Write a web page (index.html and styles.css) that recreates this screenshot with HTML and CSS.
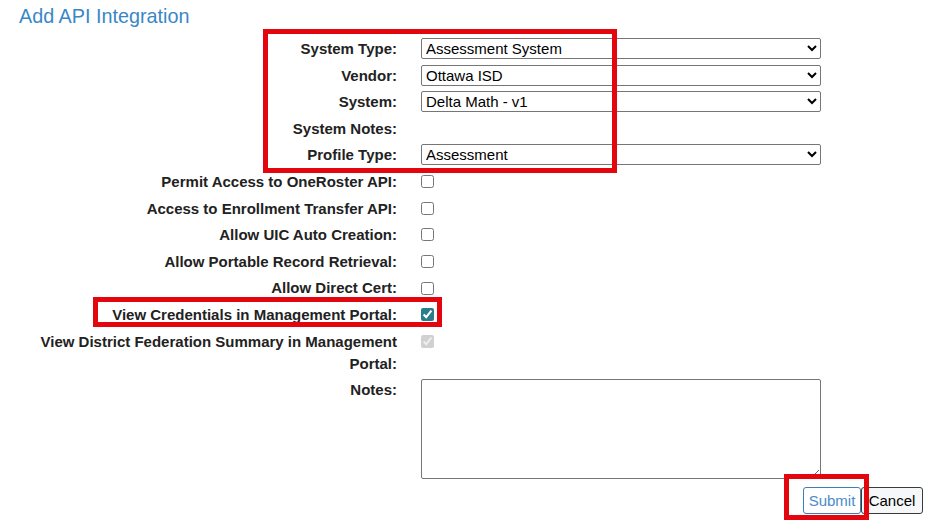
FILE: index.html
```html
<!DOCTYPE html>
<html lang="en">
<head>
<meta charset="utf-8">
<title>Add API Integration</title>
<link rel="stylesheet" href="styles.css">
</head>
<body>
<h1 class="title">Add API Integration</h1>
<form class="form">
  <div class="row">
    <label class="lbl">System Type:</label>
    <select class="sel"><option>Assessment System</option></select>
  </div>
  <div class="row">
    <label class="lbl">Vendor:</label>
    <select class="sel"><option>Ottawa ISD</option></select>
  </div>
  <div class="row">
    <label class="lbl">System:</label>
    <select class="sel"><option>Delta Math - v1</option></select>
  </div>
  <div class="row">
    <label class="lbl">System Notes:</label>
    <div class="empty"></div>
  </div>
  <div class="row">
    <label class="lbl">Profile Type:</label>
    <select class="sel"><option>Assessment</option></select>
  </div>
  <div class="row">
    <label class="lbl">Permit Access to OneRoster API:</label>
    <input class="chk" type="checkbox">
  </div>
  <div class="row">
    <label class="lbl">Access to Enrollment Transfer API:</label>
    <input class="chk" type="checkbox">
  </div>
  <div class="row">
    <label class="lbl">Allow UIC Auto Creation:</label>
    <input class="chk" type="checkbox">
  </div>
  <div class="row">
    <label class="lbl">Allow Portable Record Retrieval:</label>
    <input class="chk" type="checkbox">
  </div>
  <div class="row">
    <label class="lbl">Allow Direct Cert:</label>
    <input class="chk" type="checkbox">
  </div>
  <div class="row">
    <label class="lbl">View Credentials in Management Portal:</label>
    <input class="chk" type="checkbox" checked>
  </div>
  <div class="row">
    <label class="lbl">View District Federation Summary in Management Portal:</label>
    <input class="chk" type="checkbox" checked disabled>
  </div>
  <div class="row row-notes">
    <label class="lbl">Notes:</label>
    <textarea class="notes"></textarea>
  </div>
  <div class="actions">
    <button type="button" class="btn btn-submit">Submit</button>
    <button type="button" class="btn btn-cancel">Cancel</button>
  </div>
</form>
<div class="mark mark-top"></div>
<div class="mark mark-cred"></div>
<div class="mark mark-submit"></div>
</body>
</html>
```
FILE: styles.css
```css
html, body {
  margin: 0;
  padding: 0;
  background: #ffffff;
}
body {
  font-family: "Liberation Sans", Arial, sans-serif;
  color: #222222;
  width: 936px;
  height: 527px;
  overflow: hidden;
  position: relative;
}
.title {
  margin: 0;
  padding: 5px 0 0 19px;
  font-size: 19.8px;
  line-height: 22px;
  font-weight: normal;
  color: #3a87c6;
}
.form {
  width: 923px;
  margin: 0;
  padding-top: 8.7px;
}
.row {
  display: flex;
  align-items: flex-start;
  padding: 2.3px 0;
}
.lbl {
  width: 397px;
  flex: none;
  text-align: right;
  font-weight: bold;
  font-size: 15px;
  line-height: 22px;
  color: #222222;
  margin-right: 24px;
  box-sizing: border-box;
  padding-left: 30px;
}
.sel {
  width: 400px;
  height: 21px;
  margin: 0;
  box-sizing: border-box;
  font-family: "Liberation Sans", Arial, sans-serif;
  font-size: 15px;
  color: #000000;
  border: 1px solid #767676;
  border-radius: 2px;
  background-color: #ffffff;
  padding: 0;
}
.empty {
  height: 22px;
}
.chk {
  width: 13px;
  height: 13px;
  margin: 4.3px 0 0 0;
  accent-color: #2a7e8c;
}
.notes {
  width: 400px;
  height: 100px;
  margin: 0;
  box-sizing: border-box;
  border: 1px solid #767676;
  border-radius: 2px;
  font-family: "Liberation Sans", Arial, sans-serif;
  font-size: 14px;
  resize: vertical;
}
.actions {
  display: flex;
  justify-content: flex-end;
  margin-top: 5.5px;
}
.btn {
  height: 27px;
  box-sizing: border-box;
  font-family: "Liberation Sans", Arial, sans-serif;
  font-size: 15px;
  border-radius: 3px;
  margin: 0;
  cursor: pointer;
}
.btn-submit {
  width: 58px;
  padding: 0 4px;
  color: #4a8bc9;
  background: #ffffff;
  border: 1px solid #3f7fb8;
}
.btn-cancel {
  width: 62px;
  padding: 0 5px;
  color: #000000;
  background: #f6f7f9;
  border: 1px solid #3a3a3a;
}
.mark {
  position: absolute;
  border: 5px solid #e3060f;
  box-sizing: border-box;
  pointer-events: none;
}
.mark-top {
  left: 263px;
  top: 29px;
  width: 354px;
  height: 144px;
}
.mark-cred {
  left: 93px;
  top: 297px;
  width: 349px;
  height: 30px;
}
.mark-submit {
  left: 784px;
  top: 474px;
  width: 85px;
  height: 46px;
}
```
